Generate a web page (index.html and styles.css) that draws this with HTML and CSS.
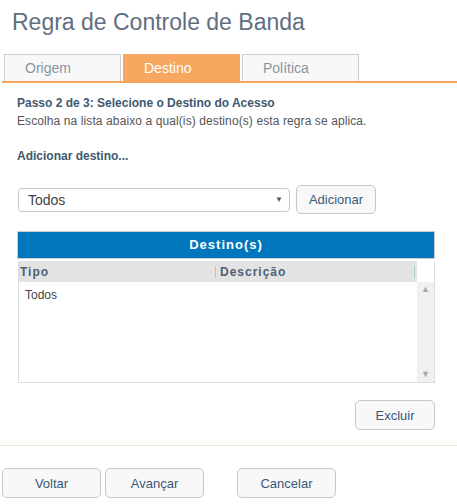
FILE: index.html
```html
<!DOCTYPE html>
<html lang="pt-BR">
<head>
    <meta charset="UTF-8">
    <title>Regra de Controle de Banda</title>
    <link rel="stylesheet" href="styles.css">
</head>
<body>
    <h1 class="title">Regra de Controle de Banda</h1>

    <div class="tabs">
        <div class="tab">Origem</div>
        <div class="tab active">Destino</div>
        <div class="tab">Política</div>
    </div>

    <div class="content">
        <p class="step">Passo 2 de 3: Selecione o Destino do Acesso</p>
        <p class="hint">Escolha na lista abaixo a qual(is) destino(s) esta regra se aplica.</p>

        <p class="add-label">Adicionar destino...</p>

        <div class="add-row">
            <div class="select">
                <span>Todos</span>
                <span class="caret">&#9660;</span>
            </div>
            <button class="btn btn-add">Adicionar</button>
        </div>

        <div class="grid-title">Destino(s)</div>
        <div class="grid">
            <div class="grid-main">
                <div class="grid-head">
                    <div class="col col-tipo">Tipo</div>
                    <div class="col col-desc">Descrição</div>
                </div>
                <div class="grid-body">
                    <div class="row">Todos</div>
                </div>
            </div>
            <div class="scroll">
                <div class="scroll-top"></div>
                <div class="scroll-track">
                    <span class="arrow">&#9650;</span>
                    <span class="arrow">&#9660;</span>
                </div>
            </div>
        </div>

        <div class="delete-row">
            <button class="btn btn-del">Excluir</button>
        </div>
    </div>

    <div class="footer">
        <button class="btn btn-nav">Voltar</button>
        <button class="btn btn-nav">Avançar</button>
        <button class="btn btn-nav btn-cancel">Cancelar</button>
    </div>
</body>
</html>
```

FILE: styles.css
```css
body {
    margin: 0;
    font-family: "Liberation Sans", Arial, sans-serif;
    background: #fff;
    color: #444;
}
.title {
    margin: 0;
    padding: 9px 0 0 12px;
    height: 45px;
    box-sizing: border-box;
    font-size: 23px;
    font-weight: normal;
    color: #5f6f82;
}
.tabs {
    display: flex;
    gap: 2px;
    margin: 9px 0 0 2px;
    padding-left: 2px;
    border-bottom: 2px solid #f6a55e;
}
.tab {
    width: 95px;
    height: 26px;
    line-height: 27px;
    padding-left: 20px;
    border: 1px solid #ccc;
    border-bottom: none;
    background: #f8f8f8;
    color: #8a94a0;
    font-size: 14px;
}
.tab.active {
    background: #f6a860;
    border-color: #f6a860;
    color: #fff;
}
.content {
    padding: 0 22px 0 17px;
}
.step {
    margin: 13px 0 0;
    font-size: 12px;
    font-weight: bold;
    color: #3e5871;
}
.hint {
    margin: 4px 0 0;
    font-size: 12px;
    letter-spacing: 0.1px;
    color: #555;
}
.add-label {
    margin: 21px 0 0;
    font-size: 12px;
    font-weight: bold;
    color: #3e5871;
}
.add-row {
    display: flex;
    align-items: center;
    gap: 6px;
    margin-top: 22px;
    padding-left: 1px;
}
.select {
    width: 272px;
    height: 24px;
    border: 1px solid #c8c8c8;
    border-radius: 4px;
    display: flex;
    align-items: center;
    justify-content: space-between;
    padding: 0 6px 0 9px;
    box-sizing: border-box;
    font-size: 14px;
    color: #444;
}
.caret {
    font-size: 8px;
    color: #555;
}
.btn {
    font-family: "Liberation Sans", Arial, sans-serif;
    font-size: 13px;
    color: #3a5878;
    background: #f8f8f8;
    border: 1px solid #c8c8c8;
    border-radius: 5px;
    cursor: pointer;
}
.btn-add {
    width: 80px;
    height: 29px;
}
.grid-title {
    margin-top: 17px;
    height: 26px;
    line-height: 26px;
    background: #0077bd;
    border: 1px solid #ccc;
    color: #fff;
    font-size: 13px;
    font-weight: bold;
    letter-spacing: 1px;
    text-align: center;
}
.grid {
    display: flex;
    margin: 2px 0 0 1px;
    height: 122px;
    border: 1px solid #ddd;
    border-top: none;
    box-sizing: border-box;
}
.grid-main {
    flex: 1;
}
.grid-head {
    display: flex;
    height: 21px;
    background: #e3e3e3;
    font-size: 12px;
    font-weight: bold;
    letter-spacing: 1px;
    color: #4b6078;
    align-items: center;
}
.col-tipo {
    width: 195px;
    padding-left: 1px;
}
.col-desc {
    flex: 1;
    border-left: 1px solid #a9d3c0;
    border-right: 1px solid #a9d3c0;
    margin-right: 2px;
    padding-left: 4px;
    line-height: 12px;
}
.row {
    padding: 6px 0 0 6px;
    font-size: 12px;
    color: #444;
}
.scroll {
    width: 17px;
    display: flex;
    flex-direction: column;
}
.scroll-top {
    height: 21px;
    background: #fff;
}
.scroll-track {
    flex: 1;
    background: #f0f0f0;
    display: flex;
    flex-direction: column;
    justify-content: space-between;
    align-items: center;
    padding: 2px 0 3px;
}
.arrow {
    font-size: 9px;
    color: #a8a8a8;
}
.delete-row {
    display: flex;
    justify-content: flex-end;
    margin-top: 17px;
}
.btn-del {
    width: 80px;
    height: 30px;
}
.footer {
    margin-top: 15px;
    border-top: 1px solid #f5e6d8;
    padding: 22px 0 0 2px;
    display: flex;
    gap: 4px;
}
.btn-nav {
    width: 99px;
    height: 30px;
}
.btn-cancel {
    margin-left: 29px;
}
```
